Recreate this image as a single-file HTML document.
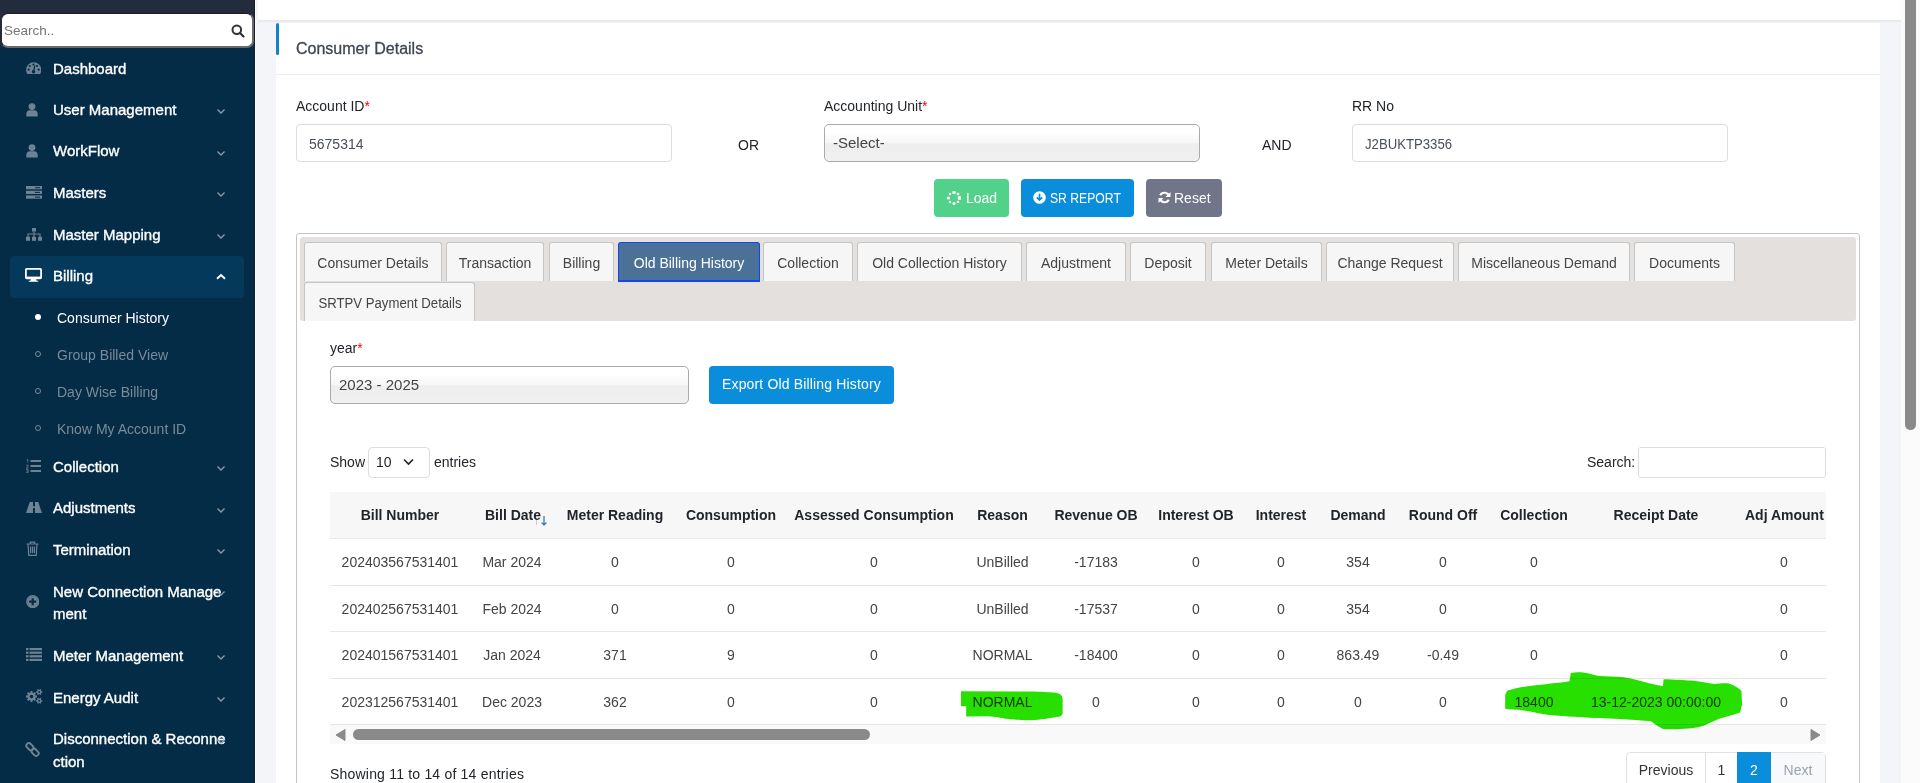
<!DOCTYPE html>
<html><head><meta charset="utf-8">
<style>
*{box-sizing:border-box;margin:0;padding:0}
html,body{width:1920px;height:783px;overflow:hidden;background:#f4f5f8;font-family:"Liberation Sans",sans-serif;font-size:14px;color:#212529;position:relative}
.abs{position:absolute}
</style></head><body>
<div class="abs" style="left:0;top:0;width:255px;height:783px;background:#042c47"></div>
<div class="abs" style="left:0;top:0;width:255px;height:47px;background:#232c3d"></div>
<div class="abs" style="left:254px;top:0;width:1px;height:783px;background:#161c28"></div>
<div class="abs" style="left:255px;top:0;width:1px;height:783px;background:#fdfdfd"></div>
<div class="abs" style="left:1px;top:13px;width:253px;height:35px;background:#fff;border:solid #6b6b6b;border-width:1px 2px 2px 1px;border-top-color:#1c1c1c;border-left-color:#2a2a2a;border-radius:7px"></div>
<div class="abs" style="left:4px;top:21px;line-height:20px;font-size:13.5px;color:#757575">Search..</div>
<svg class="abs" style="left:231px;top:24px" width="14" height="14" viewBox="0 0 14 14"><circle cx="5.8" cy="5.8" r="4.3" fill="none" stroke="#333" stroke-width="2"/><line x1="9" y1="9" x2="12.5" y2="12.5" stroke="#333" stroke-width="2.2" stroke-linecap="round"/></svg>
<div class="abs" style="left:10px;top:256px;width:234px;height:41.5px;background:#04395b;border-radius:4px"></div>
<div class="abs" style="left:53px;top:58.7px;line-height:20px;font-size:15px;color:#fff;white-space:nowrap;-webkit-text-stroke:0.35px #fff">Dashboard</div>
<div class="abs" style="left:26px;top:62px;line-height:0"><svg width="15.4" height="12.2" viewBox="0 0 16 12.7"><path d="M8 0.2A7.9 7.9 0 0 0 0.1 8.1c0 1.7 0.4 3.2 1.2 4.5h13.4c0.8-1.3 1.2-2.8 1.2-4.5A7.9 7.9 0 0 0 8 0.2z" fill="#6d8294"/><circle cx="2.8" cy="8" r="1.1" fill="#042c47"/><circle cx="13.2" cy="8" r="1.1" fill="#042c47"/><circle cx="4" cy="4.2" r="1.1" fill="#042c47"/><circle cx="11.4" cy="4.2" r="1.1" fill="#042c47"/><circle cx="7.7" cy="2.6" r="1.1" fill="#042c47"/><path d="M9.2 3.6 L8 9.5" stroke="#042c47" stroke-width="1.3"/><circle cx="7.8" cy="10.2" r="1.8" fill="#042c47"/></svg></div>
<div class="abs" style="left:53px;top:99.8px;line-height:20px;font-size:15px;color:#fff;white-space:nowrap;-webkit-text-stroke:0.35px #fff">User Management</div>
<div class="abs" style="left:26px;top:103px;line-height:0"><svg width="12" height="14" viewBox="0 0 12 14"><circle cx="6" cy="3.6" r="3.4" fill="#6d8294"/><path d="M0.3 13.5V11c0-2.4 1.6-3.8 3.4-3.8h4.6c1.8 0 3.4 1.4 3.4 3.8v2.5z" fill="#6d8294"/></svg></div>
<svg class="abs" style="left:216px;top:108px" width="10" height="7" viewBox="0 0 10 7"><polyline points="1.5,1.5 5,5 8.5,1.5" fill="none" stroke="#8a9cac" stroke-width="1.3"/></svg>
<div class="abs" style="left:53px;top:141.3px;line-height:20px;font-size:15px;color:#fff;white-space:nowrap;-webkit-text-stroke:0.35px #fff">WorkFlow</div>
<div class="abs" style="left:26px;top:144px;line-height:0"><svg width="12" height="14" viewBox="0 0 12 14"><circle cx="6" cy="3.6" r="3.4" fill="#6d8294"/><path d="M0.3 13.5V11c0-2.4 1.6-3.8 3.4-3.8h4.6c1.8 0 3.4 1.4 3.4 3.8v2.5z" fill="#6d8294"/></svg></div>
<svg class="abs" style="left:216px;top:150px" width="10" height="7" viewBox="0 0 10 7"><polyline points="1.5,1.5 5,5 8.5,1.5" fill="none" stroke="#8a9cac" stroke-width="1.3"/></svg>
<div class="abs" style="left:53px;top:183.0px;line-height:20px;font-size:15px;color:#fff;white-space:nowrap;-webkit-text-stroke:0.35px #fff">Masters</div>
<div class="abs" style="left:26px;top:186px;line-height:0"><svg width="16" height="13" viewBox="0 0 16 13"><rect x="0" y="0" width="16" height="3.3" fill="#6d8294"/><rect x="0" y="4.7" width="16" height="3.3" fill="#6d8294"/><rect x="0" y="9.4" width="16" height="3.3" fill="#6d8294"/><rect x="9" y="1.2" width="5" height="1" fill="#042c47"/><rect x="9" y="5.9" width="5" height="1" fill="#042c47"/><rect x="9" y="10.6" width="5" height="1" fill="#042c47"/></svg></div>
<svg class="abs" style="left:216px;top:191px" width="10" height="7" viewBox="0 0 10 7"><polyline points="1.5,1.5 5,5 8.5,1.5" fill="none" stroke="#8a9cac" stroke-width="1.3"/></svg>
<div class="abs" style="left:53px;top:224.6px;line-height:20px;font-size:15px;color:#fff;white-space:nowrap;-webkit-text-stroke:0.35px #fff">Master Mapping</div>
<div class="abs" style="left:26px;top:228px;line-height:0"><svg width="16" height="13" viewBox="0 0 16 13"><rect x="6" y="0" width="4" height="3.5" fill="#6d8294"/><path d="M8 3.5V6M2 9V6h12v3M8 6v3" stroke="#6d8294" stroke-width="1.2" fill="none"/><rect x="0" y="8.8" width="4" height="4" fill="#6d8294"/><rect x="6" y="8.8" width="4" height="4" fill="#6d8294"/><rect x="12" y="8.8" width="4" height="4" fill="#6d8294"/></svg></div>
<svg class="abs" style="left:216px;top:233px" width="10" height="7" viewBox="0 0 10 7"><polyline points="1.5,1.5 5,5 8.5,1.5" fill="none" stroke="#8a9cac" stroke-width="1.3"/></svg>
<div class="abs" style="left:53px;top:266.3px;line-height:20px;font-size:15px;color:#fff;white-space:nowrap;-webkit-text-stroke:0.35px #fff">Billing</div>
<div class="abs" style="left:25px;top:268px;line-height:0"><svg width="17" height="14" viewBox="0 0 17 14"><rect x="0.9" y="0.9" width="15.2" height="9.4" rx="0.8" fill="none" stroke="#fff" stroke-width="1.8"/><rect x="1" y="8.6" width="15" height="2" fill="#fff"/><path d="M6 10.5h5l0.6 2.2h1.6v1.1H3.8v-1.1h1.6z" fill="#fff"/></svg></div>
<svg class="abs" style="left:216px;top:273px" width="10" height="7" viewBox="0 0 10 7"><polyline points="1,5.8 5,2 9,5.8" fill="none" stroke="#fff" stroke-width="1.9"/></svg>
<div class="abs" style="left:53px;top:456.8px;line-height:20px;font-size:15px;color:#fff;white-space:nowrap;-webkit-text-stroke:0.35px #fff">Collection</div>
<div class="abs" style="left:26px;top:459px;line-height:0"><svg width="15" height="14" viewBox="0 0 15 14"><rect x="4.5" y="1" width="10.5" height="2" fill="#6d8294"/><rect x="4.5" y="6" width="10.5" height="2" fill="#6d8294"/><rect x="4.5" y="11" width="10.5" height="2" fill="#6d8294"/><path d="M0.5 0.3h1.2v3.2M0.2 6.2h2v1.3l-2 1.6h2.2M0.2 10.6h2v3h-2M0.4 12.1h1.6" stroke="#6d8294" stroke-width="0.8" fill="none"/></svg></div>
<svg class="abs" style="left:216px;top:465px" width="10" height="7" viewBox="0 0 10 7"><polyline points="1.5,1.5 5,5 8.5,1.5" fill="none" stroke="#8a9cac" stroke-width="1.3"/></svg>
<div class="abs" style="left:53px;top:498.1px;line-height:20px;font-size:15px;color:#fff;white-space:nowrap;-webkit-text-stroke:0.35px #fff">Adjustments</div>
<div class="abs" style="left:26px;top:502px;line-height:0"><svg width="16" height="11" viewBox="0 0 16 11"><path d="M3.8 0h8.4L16 11H0z" fill="#6d8294"/><rect x="7" y="0" width="2" height="4.3" fill="#042c47"/><rect x="7" y="6" width="2" height="5" fill="#042c47"/></svg></div>
<svg class="abs" style="left:216px;top:507px" width="10" height="7" viewBox="0 0 10 7"><polyline points="1.5,1.5 5,5 8.5,1.5" fill="none" stroke="#8a9cac" stroke-width="1.3"/></svg>
<div class="abs" style="left:53px;top:539.9px;line-height:20px;font-size:15px;color:#fff;white-space:nowrap;-webkit-text-stroke:0.35px #fff">Termination</div>
<div class="abs" style="left:26px;top:541px;line-height:0"><svg width="13" height="15" viewBox="0 0 13 15"><path d="M0.5 3h12M4.3 3V1.2h4.4V3M2 3l0.8 11.3h7.4L11 3M4.6 5.5v6.5M6.5 5.5v6.5M8.4 5.5v6.5" stroke="#6d8294" stroke-width="1.2" fill="none"/></svg></div>
<svg class="abs" style="left:216px;top:548px" width="10" height="7" viewBox="0 0 10 7"><polyline points="1.5,1.5 5,5 8.5,1.5" fill="none" stroke="#8a9cac" stroke-width="1.3"/></svg>
<div class="abs" style="left:53px;top:645.9px;line-height:20px;font-size:15px;color:#fff;white-space:nowrap;-webkit-text-stroke:0.35px #fff">Meter Management</div>
<div class="abs" style="left:26px;top:647.5px;line-height:0"><svg width="16" height="13" viewBox="0 0 16 13"><rect x="0" y="0" width="2.5" height="2.2" fill="#6d8294"/><rect x="0" y="3.6" width="2.5" height="2.2" fill="#6d8294"/><rect x="0" y="7.2" width="2.5" height="2.2" fill="#6d8294"/><rect x="0" y="10.8" width="2.5" height="2.2" fill="#6d8294"/><rect x="3.5" y="0" width="12.5" height="2.2" fill="#6d8294"/><rect x="3.5" y="3.6" width="12.5" height="2.2" fill="#6d8294"/><rect x="3.5" y="7.2" width="12.5" height="2.2" fill="#6d8294"/><rect x="3.5" y="10.8" width="12.5" height="2.2" fill="#6d8294"/></svg></div>
<svg class="abs" style="left:216px;top:654px" width="10" height="7" viewBox="0 0 10 7"><polyline points="1.5,1.5 5,5 8.5,1.5" fill="none" stroke="#8a9cac" stroke-width="1.3"/></svg>
<div class="abs" style="left:53px;top:687.8px;line-height:20px;font-size:15px;color:#fff;white-space:nowrap;-webkit-text-stroke:0.35px #fff">Energy Audit</div>
<div class="abs" style="left:25px;top:688px;line-height:0"><svg width="18" height="17" viewBox="0 0 18 17"><polygon points="12.01,7.52 12.01,9.48 10.60,9.40 10.04,10.76 11.09,11.70 9.70,13.09 8.76,12.04 7.40,12.60 7.48,14.01 5.52,14.01 5.60,12.60 4.24,12.04 3.30,13.09 1.91,11.70 2.96,10.76 2.40,9.40 0.99,9.48 0.99,7.52 2.40,7.60 2.96,6.24 1.91,5.30 3.30,3.91 4.24,4.96 5.60,4.40 5.52,2.99 7.48,2.99 7.40,4.40 8.76,4.96 9.70,3.91 11.09,5.30 10.04,6.24 10.60,7.60" fill="#6d8294"/><circle cx="6.5" cy="8.5" r="1.8" fill="#042c47"/><polygon points="17.31,3.25 17.31,4.75 16.41,4.65 15.87,5.58 16.40,6.32 15.11,7.07 14.74,6.24 13.66,6.24 13.29,7.07 12.00,6.32 12.53,5.58 11.99,4.65 11.09,4.75 11.09,3.25 11.99,3.35 12.53,2.42 12.00,1.68 13.29,0.93 13.66,1.76 14.74,1.76 15.11,0.93 16.40,1.68 15.87,2.42 16.41,3.35" fill="#6d8294"/><circle cx="14.2" cy="4" r="1.0" fill="#042c47"/><polygon points="17.31,12.05 17.31,13.55 16.41,13.45 15.87,14.38 16.40,15.12 15.11,15.87 14.74,15.04 13.66,15.04 13.29,15.87 12.00,15.12 12.53,14.38 11.99,13.45 11.09,13.55 11.09,12.05 11.99,12.15 12.53,11.22 12.00,10.48 13.29,9.73 13.66,10.56 14.74,10.56 15.11,9.73 16.40,10.48 15.87,11.22 16.41,12.15" fill="#6d8294"/><circle cx="14.2" cy="12.8" r="1.0" fill="#042c47"/></svg></div>
<svg class="abs" style="left:216px;top:696px" width="10" height="7" viewBox="0 0 10 7"><polyline points="1.5,1.5 5,5 8.5,1.5" fill="none" stroke="#8a9cac" stroke-width="1.3"/></svg>
<div class="abs" style="left:53px;top:581.5px;line-height:20px;font-size:15px;color:#fff;white-space:nowrap;-webkit-text-stroke:0.35px #fff">New Connection Manage</div>
<div class="abs" style="left:53px;top:604.1px;line-height:20px;font-size:15px;color:#fff;white-space:nowrap;-webkit-text-stroke:0.35px #fff">ment</div>
<div class="abs" style="left:26px;top:595px;line-height:0"><svg width="13.4" height="13.4" viewBox="0 0 15 15"><circle cx="7.5" cy="7.5" r="6.6" fill="none" stroke="#6d8294" stroke-width="1.6"/><circle cx="7.5" cy="7.5" r="6" fill="#6d8294"/><path d="M7.5 3.6v7.8M3.6 7.5h7.8" stroke="#042c47" stroke-width="2.4"/></svg></div>
<svg class="abs" style="left:216px;top:590px" width="10" height="7" viewBox="0 0 10 7"><polyline points="1.5,1.5 5,5 8.5,1.5" fill="none" stroke="#8a9cac" stroke-width="1.3"/></svg>
<div class="abs" style="left:53px;top:729.4px;line-height:20px;font-size:15px;color:#fff;white-space:nowrap;-webkit-text-stroke:0.35px #fff">Disconnection &amp; Reconne</div>
<div class="abs" style="left:53px;top:752.1px;line-height:20px;font-size:15px;color:#fff;white-space:nowrap;-webkit-text-stroke:0.35px #fff">ction</div>
<div class="abs" style="left:25px;top:742px;line-height:0"><svg width="15" height="15" viewBox="0 0 15 15"><rect x="0.9" y="2.2" width="8" height="5" rx="2.5" transform="rotate(45 4.9 4.7)" fill="none" stroke="#6d8294" stroke-width="1.9"/><rect x="6.1" y="7.8" width="8" height="5" rx="2.5" transform="rotate(45 10.1 10.3)" fill="none" stroke="#6d8294" stroke-width="1.9"/></svg></div>
<svg class="abs" style="left:216px;top:738px" width="10" height="7" viewBox="0 0 10 7"><polyline points="1.5,1.5 5,5 8.5,1.5" fill="none" stroke="#8a9cac" stroke-width="1.3"/></svg>
<div class="abs" style="left:57px;top:308.0px;line-height:20px;font-size:14px;color:#fff;white-space:nowrap">Consumer History</div>
<div class="abs" style="left:35px;top:314.2px;width:6px;height:6px;border-radius:50%;background:#fff"></div>
<div class="abs" style="left:57px;top:344.8px;line-height:20px;font-size:14px;color:#7a8a98;white-space:nowrap">Group Billed View</div>
<div class="abs" style="left:35px;top:351.0px;width:6px;height:6px;border-radius:50%;border:1.3px solid #7a8a98"></div>
<div class="abs" style="left:57px;top:382.0px;line-height:20px;font-size:14px;color:#7a8a98;white-space:nowrap">Day Wise Billing</div>
<div class="abs" style="left:35px;top:388.2px;width:6px;height:6px;border-radius:50%;border:1.3px solid #7a8a98"></div>
<div class="abs" style="left:57px;top:418.8px;line-height:20px;font-size:14px;color:#7a8a98;white-space:nowrap">Know My Account ID</div>
<div class="abs" style="left:35px;top:425.0px;width:6px;height:6px;border-radius:50%;border:1.3px solid #7a8a98"></div>
<div class="abs" style="left:258px;top:0;width:1643px;height:20px;background:#fff"></div>
<div class="abs" style="left:258px;top:20px;width:1643px;height:3px;background:linear-gradient(#e6e7ec,#f1f2f6)"></div>
<div class="abs" style="left:276px;top:23px;width:1604px;height:770px;background:#fff"></div>
<div class="abs" style="left:276px;top:23px;width:3px;height:32px;background:#1582c5;border-radius:2px"></div>
<div class="abs" style="left:276px;top:74px;width:1604px;height:1px;background:#ebedf0"></div>
<div class="abs" style="left:296px;top:38.0px;line-height:22px;font-size:16px;color:#3f4650;font-weight:400;white-space:nowrap;-webkit-text-stroke:0.3px #3f4650">Consumer Details</div>
<div class="abs" style="left:1901px;top:0;width:19px;height:783px;background:#fbfbfb"></div>
<div class="abs" style="left:1905px;top:0;width:11px;height:430px;background:#8a8a8a;border-radius:0 0 6px 6px"></div>
<div class="abs" style="left:296px;top:96.4px;line-height:20px;font-size:14px;color:#212529;font-weight:400;white-space:nowrap;">Account ID<span style="color:#ff0000">*</span></div>
<div class="abs" style="left:824px;top:96.4px;line-height:20px;font-size:14px;color:#212529;font-weight:400;white-space:nowrap;">Accounting Unit<span style="color:#ff0000">*</span></div>
<div class="abs" style="left:1352px;top:96.4px;line-height:20px;font-size:14px;color:#212529;font-weight:400;white-space:nowrap;">RR No</div>
<div class="abs" style="left:296px;top:124px;width:376px;height:38px;border:1px solid #dadde1;border-radius:4px;background:#fff"></div>
<div class="abs" style="left:309px;top:134.2px;line-height:20px;font-size:14px;color:#495057;font-weight:400;white-space:nowrap;">5675314</div>
<div class="abs" style="left:738px;top:135.2px;line-height:20px;font-size:14px;color:#212529;font-weight:400;white-space:nowrap;">OR</div>
<div class="abs" style="left:824px;top:124px;width:376px;height:38px;border:1px solid #aaa;border-radius:5px;background:linear-gradient(#fff 0%,#fff 20%,#f6f6f6 50%,#eee 52%,#f0f0f0 100%)"></div>
<div class="abs" style="left:833px;top:133.2px;line-height:20px;font-size:15px;color:#444;font-weight:400;white-space:nowrap;">-Select-</div>
<div class="abs" style="left:1262px;top:135.2px;line-height:20px;font-size:14px;color:#212529;font-weight:400;white-space:nowrap;">AND</div>
<div class="abs" style="left:1352px;top:124px;width:376px;height:38px;border:1px solid #dadde1;border-radius:4px;background:#fff"></div>
<div class="abs" style="left:1365px;top:134.2px;line-height:20px;font-size:14px;color:#495057;font-weight:400;white-space:nowrap;transform:scaleX(0.94);transform-origin:0 0">J2BUKTP3356</div>
<div class="abs" style="left:934px;top:179px;width:75px;height:38px;background:#52d18b;border-radius:4px"></div>
<div class="abs" style="left:947px;top:191px;line-height:0"><svg width="14" height="14" viewBox="0 0 14 14"><circle cx="12.60" cy="7.00" r="1.9" fill="#fff"/><circle cx="10.96" cy="10.96" r="1.3" fill="#fff"/><circle cx="7.00" cy="12.60" r="1.5" fill="#fff"/><circle cx="3.04" cy="10.96" r="1.2" fill="#fff"/><circle cx="1.40" cy="7.00" r="1.6" fill="#fff"/><circle cx="3.04" cy="3.04" r="1.2" fill="#fff"/><circle cx="7.00" cy="1.40" r="1.7" fill="#fff"/><circle cx="10.96" cy="3.04" r="1.4" fill="#fff"/></svg></div>
<div class="abs" style="left:966px;top:188.2px;line-height:20px;font-size:14px;color:#fff;font-weight:400;white-space:nowrap;">Load</div>
<div class="abs" style="left:1021px;top:179px;width:113px;height:38px;background:#0a8ddb;border-radius:4px"></div>
<svg class="abs" style="left:1033px;top:191px" width="13" height="13" viewBox="0 0 13 13"><circle cx="6.5" cy="6.5" r="6.3" fill="#fff"/><path d="M6.5 2.8v6M3.8 6.3l2.7 2.7 2.7-2.7" stroke="#0a8ddb" stroke-width="1.7" fill="none"/></svg>
<div class="abs" style="left:1050px;top:188.2px;line-height:20px;font-size:14px;color:#fff;font-weight:400;white-space:nowrap;transform:scaleX(0.87);transform-origin:0 0">SR REPORT</div>
<div class="abs" style="left:1146px;top:179px;width:76px;height:38px;background:#70758a;border-radius:4px"></div>
<svg class="abs" style="left:1158px;top:191px" width="13" height="13" viewBox="0 0 13 13"><path d="M11 5.2A4.8 4.8 0 0 0 2.2 4.2M2 7.8A4.8 4.8 0 0 0 10.8 8.8" stroke="#fff" stroke-width="2.2" fill="none"/><path d="M12.5 1v5H7.5zM0.5 12V7h5z" fill="#fff"/></svg>
<div class="abs" style="left:1174px;top:188.2px;line-height:20px;font-size:14px;color:#fff;font-weight:400;white-space:nowrap;">Reset</div>
<div class="abs" style="left:296px;top:233px;width:1564px;height:600px;border:1px solid #c5c5c5;border-radius:3px;background:#fff"></div>
<div class="abs" style="left:300px;top:237px;width:1556px;height:84px;background:#e4e0de;border-radius:3px"></div>
<div class="abs" style="left:304px;top:242px;width:138px;height:39px;background:#f6f6f6;border:1px solid #c5c5c5;border-bottom:none;border-radius:3px 3px 0 0"></div>
<div class="abs" style="left:223.0px;width:300px;text-align:center;top:253.0px;line-height:20px;font-size:14px;color:#454545;font-weight:400;white-space:nowrap;">Consumer Details</div>
<div class="abs" style="left:446px;top:242px;width:98px;height:39px;background:#f6f6f6;border:1px solid #c5c5c5;border-bottom:none;border-radius:3px 3px 0 0"></div>
<div class="abs" style="left:345.0px;width:300px;text-align:center;top:253.0px;line-height:20px;font-size:14px;color:#454545;font-weight:400;white-space:nowrap;">Transaction</div>
<div class="abs" style="left:549px;top:242px;width:65px;height:39px;background:#f6f6f6;border:1px solid #c5c5c5;border-bottom:none;border-radius:3px 3px 0 0"></div>
<div class="abs" style="left:431.5px;width:300px;text-align:center;top:253.0px;line-height:20px;font-size:14px;color:#454545;font-weight:400;white-space:nowrap;">Billing</div>
<div class="abs" style="left:618px;top:242px;width:142px;height:40px;background:#4c7196;border:1px solid #0d46f5;border-bottom-width:2px;border-radius:3px 3px 0 0"></div>
<div class="abs" style="left:539.0px;width:300px;text-align:center;top:253.0px;line-height:20px;font-size:14px;color:#fff;font-weight:400;white-space:nowrap;">Old Billing History</div>
<div class="abs" style="left:763px;top:242px;width:90px;height:39px;background:#f6f6f6;border:1px solid #c5c5c5;border-bottom:none;border-radius:3px 3px 0 0"></div>
<div class="abs" style="left:658.0px;width:300px;text-align:center;top:253.0px;line-height:20px;font-size:14px;color:#454545;font-weight:400;white-space:nowrap;">Collection</div>
<div class="abs" style="left:857px;top:242px;width:165px;height:39px;background:#f6f6f6;border:1px solid #c5c5c5;border-bottom:none;border-radius:3px 3px 0 0"></div>
<div class="abs" style="left:789.5px;width:300px;text-align:center;top:253.0px;line-height:20px;font-size:14px;color:#454545;font-weight:400;white-space:nowrap;">Old Collection History</div>
<div class="abs" style="left:1026px;top:242px;width:100px;height:39px;background:#f6f6f6;border:1px solid #c5c5c5;border-bottom:none;border-radius:3px 3px 0 0"></div>
<div class="abs" style="left:926.0px;width:300px;text-align:center;top:253.0px;line-height:20px;font-size:14px;color:#454545;font-weight:400;white-space:nowrap;">Adjustment</div>
<div class="abs" style="left:1130px;top:242px;width:76px;height:39px;background:#f6f6f6;border:1px solid #c5c5c5;border-bottom:none;border-radius:3px 3px 0 0"></div>
<div class="abs" style="left:1018.0px;width:300px;text-align:center;top:253.0px;line-height:20px;font-size:14px;color:#454545;font-weight:400;white-space:nowrap;">Deposit</div>
<div class="abs" style="left:1211px;top:242px;width:111px;height:39px;background:#f6f6f6;border:1px solid #c5c5c5;border-bottom:none;border-radius:3px 3px 0 0"></div>
<div class="abs" style="left:1116.5px;width:300px;text-align:center;top:253.0px;line-height:20px;font-size:14px;color:#454545;font-weight:400;white-space:nowrap;">Meter Details</div>
<div class="abs" style="left:1326px;top:242px;width:128px;height:39px;background:#f6f6f6;border:1px solid #c5c5c5;border-bottom:none;border-radius:3px 3px 0 0"></div>
<div class="abs" style="left:1240.0px;width:300px;text-align:center;top:253.0px;line-height:20px;font-size:14px;color:#454545;font-weight:400;white-space:nowrap;">Change Request</div>
<div class="abs" style="left:1458px;top:242px;width:172px;height:39px;background:#f6f6f6;border:1px solid #c5c5c5;border-bottom:none;border-radius:3px 3px 0 0"></div>
<div class="abs" style="left:1394.0px;width:300px;text-align:center;top:253.0px;line-height:20px;font-size:14px;color:#454545;font-weight:400;white-space:nowrap;">Miscellaneous Demand</div>
<div class="abs" style="left:1634px;top:242px;width:101px;height:39px;background:#f6f6f6;border:1px solid #c5c5c5;border-bottom:none;border-radius:3px 3px 0 0"></div>
<div class="abs" style="left:1534.5px;width:300px;text-align:center;top:253.0px;line-height:20px;font-size:14px;color:#454545;font-weight:400;white-space:nowrap;">Documents</div>
<div class="abs" style="left:304px;top:282px;width:171px;height:39px;background:#f6f6f6;border:1px solid #c5c5c5;border-bottom:none;border-radius:3px 3px 0 0"></div>
<div class="abs" style="left:239.5px;width:300px;text-align:center;top:293.0px;line-height:20px;font-size:14px;color:#454545;font-weight:400;white-space:nowrap;transform:scaleX(0.94)">SRTPV Payment Details</div>
<div class="abs" style="left:330px;top:337.8px;line-height:20px;font-size:14px;color:#212529;font-weight:400;white-space:nowrap;">year<span style="color:#ff0000">*</span></div>
<div class="abs" style="left:330px;top:366px;width:359px;height:38px;border:1px solid #aaa;border-radius:5px;background:linear-gradient(#fff 0%,#fff 20%,#f6f6f6 50%,#eee 52%,#f0f0f0 100%)"></div>
<div class="abs" style="left:339px;top:374.7px;line-height:20px;font-size:15px;color:#444;font-weight:400;white-space:nowrap;">2023 - 2025</div>
<div class="abs" style="left:709px;top:366px;width:185px;height:38px;background:#0a8ddb;border-radius:4px"></div>
<div class="abs" style="left:722px;top:374.1px;line-height:20px;font-size:14px;color:#fff;font-weight:400;white-space:nowrap;letter-spacing:0.16px">Export Old Billing History</div>
<div class="abs" style="left:330px;top:452.2px;line-height:20px;font-size:14px;color:#212529;font-weight:400;white-space:nowrap;">Show</div>
<div class="abs" style="left:368px;top:447px;width:62px;height:31px;border:1px solid #dadde1;border-radius:4px;background:#fff"></div>
<div class="abs" style="left:376px;top:452.2px;line-height:20px;font-size:14px;color:#212529;font-weight:400;white-space:nowrap;">10</div>
<svg class="abs" style="left:403px;top:458px" width="11" height="8" viewBox="0 0 11 8"><polyline points="1,1.5 5.5,6 10,1.5" fill="none" stroke="#222" stroke-width="1.6"/></svg>
<div class="abs" style="left:434px;top:452.2px;line-height:20px;font-size:14px;color:#212529;font-weight:400;white-space:nowrap;">entries</div>
<div class="abs" style="left:1587px;top:452.2px;line-height:20px;font-size:14px;color:#212529;font-weight:400;white-space:nowrap;">Search:</div>
<div class="abs" style="left:1638px;top:447px;width:188px;height:31px;border:1px solid #dadde1;border-radius:3px;background:#fff"></div>
<div class="abs" style="left:330px;top:492px;width:1496px;height:47px;background:#f7f7f7"></div>
<div class="abs" style="left:330px;top:538px;width:1496px;height:1px;background:#e9e9e9"></div>
<div class="abs" style="left:250px;width:300px;text-align:center;top:505.2px;line-height:20px;font-size:14px;color:#212529;font-weight:700;white-space:nowrap;">Bill Number</div>
<div class="abs" style="left:485px;top:505.2px;line-height:20px;font-size:14px;color:#212529;font-weight:700;white-space:nowrap;">Bill Date</div>
<div class="abs" style="left:465px;width:300px;text-align:center;top:505.2px;line-height:20px;font-size:14px;color:#212529;font-weight:700;white-space:nowrap;">Meter Reading</div>
<div class="abs" style="left:581px;width:300px;text-align:center;top:505.2px;line-height:20px;font-size:14px;color:#212529;font-weight:700;white-space:nowrap;">Consumption</div>
<div class="abs" style="left:724px;width:300px;text-align:center;top:505.2px;line-height:20px;font-size:14px;color:#212529;font-weight:700;white-space:nowrap;">Assessed Consumption</div>
<div class="abs" style="left:852.5px;width:300px;text-align:center;top:505.2px;line-height:20px;font-size:14px;color:#212529;font-weight:700;white-space:nowrap;">Reason</div>
<div class="abs" style="left:946px;width:300px;text-align:center;top:505.2px;line-height:20px;font-size:14px;color:#212529;font-weight:700;white-space:nowrap;">Revenue OB</div>
<div class="abs" style="left:1046px;width:300px;text-align:center;top:505.2px;line-height:20px;font-size:14px;color:#212529;font-weight:700;white-space:nowrap;">Interest OB</div>
<div class="abs" style="left:1131px;width:300px;text-align:center;top:505.2px;line-height:20px;font-size:14px;color:#212529;font-weight:700;white-space:nowrap;">Interest</div>
<div class="abs" style="left:1208px;width:300px;text-align:center;top:505.2px;line-height:20px;font-size:14px;color:#212529;font-weight:700;white-space:nowrap;">Demand</div>
<div class="abs" style="left:1293px;width:300px;text-align:center;top:505.2px;line-height:20px;font-size:14px;color:#212529;font-weight:700;white-space:nowrap;">Round Off</div>
<div class="abs" style="left:1384px;width:300px;text-align:center;top:505.2px;line-height:20px;font-size:14px;color:#212529;font-weight:700;white-space:nowrap;">Collection</div>
<div class="abs" style="left:1506px;width:300px;text-align:center;top:505.2px;line-height:20px;font-size:14px;color:#212529;font-weight:700;white-space:nowrap;">Receipt Date</div>
<div class="abs" style="left:1745px;top:505.2px;line-height:20px;font-size:14px;color:#212529;font-weight:700;white-space:nowrap;">Adj Amount</div>
<div class="abs" style="left:536px;top:520px;width:1px;height:5px;background:#ccc"></div><svg class="abs" style="left:540px;top:515px" width="8" height="11" viewBox="0 0 8 11"><path d="M4 1v9M1.6 7.6L4 10l2.4-2.4" stroke="#2a6fb0" stroke-width="1.2" fill="none"/></svg>
<div class="abs" style="left:250px;width:300px;text-align:center;top:552.2px;line-height:20px;font-size:14px;color:#444;font-weight:400;white-space:nowrap;">202403567531401</div>
<div class="abs" style="left:362px;width:300px;text-align:center;top:552.2px;line-height:20px;font-size:14px;color:#444;font-weight:400;white-space:nowrap;">Mar 2024</div>
<div class="abs" style="left:465px;width:300px;text-align:center;top:552.2px;line-height:20px;font-size:14px;color:#444;font-weight:400;white-space:nowrap;">0</div>
<div class="abs" style="left:581px;width:300px;text-align:center;top:552.2px;line-height:20px;font-size:14px;color:#444;font-weight:400;white-space:nowrap;">0</div>
<div class="abs" style="left:724px;width:300px;text-align:center;top:552.2px;line-height:20px;font-size:14px;color:#444;font-weight:400;white-space:nowrap;">0</div>
<div class="abs" style="left:852.5px;width:300px;text-align:center;top:552.2px;line-height:20px;font-size:14px;color:#444;font-weight:400;white-space:nowrap;">UnBilled</div>
<div class="abs" style="left:946px;width:300px;text-align:center;top:552.2px;line-height:20px;font-size:14px;color:#444;font-weight:400;white-space:nowrap;">-17183</div>
<div class="abs" style="left:1046px;width:300px;text-align:center;top:552.2px;line-height:20px;font-size:14px;color:#444;font-weight:400;white-space:nowrap;">0</div>
<div class="abs" style="left:1131px;width:300px;text-align:center;top:552.2px;line-height:20px;font-size:14px;color:#444;font-weight:400;white-space:nowrap;">0</div>
<div class="abs" style="left:1208px;width:300px;text-align:center;top:552.2px;line-height:20px;font-size:14px;color:#444;font-weight:400;white-space:nowrap;">354</div>
<div class="abs" style="left:1293px;width:300px;text-align:center;top:552.2px;line-height:20px;font-size:14px;color:#444;font-weight:400;white-space:nowrap;">0</div>
<div class="abs" style="left:1384px;width:300px;text-align:center;top:552.2px;line-height:20px;font-size:14px;color:#444;font-weight:400;white-space:nowrap;">0</div>
<div class="abs" style="left:1634px;width:300px;text-align:center;top:552.2px;line-height:20px;font-size:14px;color:#444;font-weight:400;white-space:nowrap;">0</div>
<div class="abs" style="left:330px;top:585px;width:1496px;height:1px;background:#e6e6e6"></div>
<div class="abs" style="left:250px;width:300px;text-align:center;top:598.8px;line-height:20px;font-size:14px;color:#444;font-weight:400;white-space:nowrap;">202402567531401</div>
<div class="abs" style="left:362px;width:300px;text-align:center;top:598.8px;line-height:20px;font-size:14px;color:#444;font-weight:400;white-space:nowrap;">Feb 2024</div>
<div class="abs" style="left:465px;width:300px;text-align:center;top:598.8px;line-height:20px;font-size:14px;color:#444;font-weight:400;white-space:nowrap;">0</div>
<div class="abs" style="left:581px;width:300px;text-align:center;top:598.8px;line-height:20px;font-size:14px;color:#444;font-weight:400;white-space:nowrap;">0</div>
<div class="abs" style="left:724px;width:300px;text-align:center;top:598.8px;line-height:20px;font-size:14px;color:#444;font-weight:400;white-space:nowrap;">0</div>
<div class="abs" style="left:852.5px;width:300px;text-align:center;top:598.8px;line-height:20px;font-size:14px;color:#444;font-weight:400;white-space:nowrap;">UnBilled</div>
<div class="abs" style="left:946px;width:300px;text-align:center;top:598.8px;line-height:20px;font-size:14px;color:#444;font-weight:400;white-space:nowrap;">-17537</div>
<div class="abs" style="left:1046px;width:300px;text-align:center;top:598.8px;line-height:20px;font-size:14px;color:#444;font-weight:400;white-space:nowrap;">0</div>
<div class="abs" style="left:1131px;width:300px;text-align:center;top:598.8px;line-height:20px;font-size:14px;color:#444;font-weight:400;white-space:nowrap;">0</div>
<div class="abs" style="left:1208px;width:300px;text-align:center;top:598.8px;line-height:20px;font-size:14px;color:#444;font-weight:400;white-space:nowrap;">354</div>
<div class="abs" style="left:1293px;width:300px;text-align:center;top:598.8px;line-height:20px;font-size:14px;color:#444;font-weight:400;white-space:nowrap;">0</div>
<div class="abs" style="left:1384px;width:300px;text-align:center;top:598.8px;line-height:20px;font-size:14px;color:#444;font-weight:400;white-space:nowrap;">0</div>
<div class="abs" style="left:1634px;width:300px;text-align:center;top:598.8px;line-height:20px;font-size:14px;color:#444;font-weight:400;white-space:nowrap;">0</div>
<div class="abs" style="left:330px;top:631px;width:1496px;height:1px;background:#e6e6e6"></div>
<div class="abs" style="left:250px;width:300px;text-align:center;top:645.4px;line-height:20px;font-size:14px;color:#444;font-weight:400;white-space:nowrap;">202401567531401</div>
<div class="abs" style="left:362px;width:300px;text-align:center;top:645.4px;line-height:20px;font-size:14px;color:#444;font-weight:400;white-space:nowrap;">Jan 2024</div>
<div class="abs" style="left:465px;width:300px;text-align:center;top:645.4px;line-height:20px;font-size:14px;color:#444;font-weight:400;white-space:nowrap;">371</div>
<div class="abs" style="left:581px;width:300px;text-align:center;top:645.4px;line-height:20px;font-size:14px;color:#444;font-weight:400;white-space:nowrap;">9</div>
<div class="abs" style="left:724px;width:300px;text-align:center;top:645.4px;line-height:20px;font-size:14px;color:#444;font-weight:400;white-space:nowrap;">0</div>
<div class="abs" style="left:852.5px;width:300px;text-align:center;top:645.4px;line-height:20px;font-size:14px;color:#444;font-weight:400;white-space:nowrap;">NORMAL</div>
<div class="abs" style="left:946px;width:300px;text-align:center;top:645.4px;line-height:20px;font-size:14px;color:#444;font-weight:400;white-space:nowrap;">-18400</div>
<div class="abs" style="left:1046px;width:300px;text-align:center;top:645.4px;line-height:20px;font-size:14px;color:#444;font-weight:400;white-space:nowrap;">0</div>
<div class="abs" style="left:1131px;width:300px;text-align:center;top:645.4px;line-height:20px;font-size:14px;color:#444;font-weight:400;white-space:nowrap;">0</div>
<div class="abs" style="left:1208px;width:300px;text-align:center;top:645.4px;line-height:20px;font-size:14px;color:#444;font-weight:400;white-space:nowrap;">863.49</div>
<div class="abs" style="left:1293px;width:300px;text-align:center;top:645.4px;line-height:20px;font-size:14px;color:#444;font-weight:400;white-space:nowrap;">-0.49</div>
<div class="abs" style="left:1384px;width:300px;text-align:center;top:645.4px;line-height:20px;font-size:14px;color:#444;font-weight:400;white-space:nowrap;">0</div>
<div class="abs" style="left:1634px;width:300px;text-align:center;top:645.4px;line-height:20px;font-size:14px;color:#444;font-weight:400;white-space:nowrap;">0</div>
<div class="abs" style="left:330px;top:678px;width:1496px;height:1px;background:#e6e6e6"></div>
<div class="abs" style="left:250px;width:300px;text-align:center;top:692.0px;line-height:20px;font-size:14px;color:#444;font-weight:400;white-space:nowrap;">202312567531401</div>
<div class="abs" style="left:362px;width:300px;text-align:center;top:692.0px;line-height:20px;font-size:14px;color:#444;font-weight:400;white-space:nowrap;">Dec 2023</div>
<div class="abs" style="left:465px;width:300px;text-align:center;top:692.0px;line-height:20px;font-size:14px;color:#444;font-weight:400;white-space:nowrap;">362</div>
<div class="abs" style="left:581px;width:300px;text-align:center;top:692.0px;line-height:20px;font-size:14px;color:#444;font-weight:400;white-space:nowrap;">0</div>
<div class="abs" style="left:724px;width:300px;text-align:center;top:692.0px;line-height:20px;font-size:14px;color:#444;font-weight:400;white-space:nowrap;">0</div>
<div class="abs" style="left:852.5px;width:300px;text-align:center;top:692.0px;line-height:20px;font-size:14px;color:#444;font-weight:400;white-space:nowrap;">NORMAL</div>
<div class="abs" style="left:946px;width:300px;text-align:center;top:692.0px;line-height:20px;font-size:14px;color:#444;font-weight:400;white-space:nowrap;">0</div>
<div class="abs" style="left:1046px;width:300px;text-align:center;top:692.0px;line-height:20px;font-size:14px;color:#444;font-weight:400;white-space:nowrap;">0</div>
<div class="abs" style="left:1131px;width:300px;text-align:center;top:692.0px;line-height:20px;font-size:14px;color:#444;font-weight:400;white-space:nowrap;">0</div>
<div class="abs" style="left:1208px;width:300px;text-align:center;top:692.0px;line-height:20px;font-size:14px;color:#444;font-weight:400;white-space:nowrap;">0</div>
<div class="abs" style="left:1293px;width:300px;text-align:center;top:692.0px;line-height:20px;font-size:14px;color:#444;font-weight:400;white-space:nowrap;">0</div>
<div class="abs" style="left:1384px;width:300px;text-align:center;top:692.0px;line-height:20px;font-size:14px;color:#444;font-weight:400;white-space:nowrap;">18400</div>
<div class="abs" style="left:1506px;width:300px;text-align:center;top:692.0px;line-height:20px;font-size:14px;color:#444;font-weight:400;white-space:nowrap;">13-12-2023 00:00:00</div>
<div class="abs" style="left:1634px;width:300px;text-align:center;top:692.0px;line-height:20px;font-size:14px;color:#444;font-weight:400;white-space:nowrap;">0</div>
<div class="abs" style="left:330px;top:724px;width:1496px;height:1px;background:#e6e6e6"></div>
<div class="abs" style="left:330px;top:725px;width:1496px;height:19px;background:#f9f9f9"></div>
<div class="abs" style="left:353px;top:729px;width:517px;height:11px;background:#8a8a8a;border-radius:6px"></div>
<svg class="abs" style="left:335px;top:729px" width="11" height="12" viewBox="0 0 11 12"><path d="M1 6L10 0.5V11.5z" fill="#8a8a8a" stroke="#8a8a8a" stroke-linejoin="round"/></svg>
<svg class="abs" style="left:1810px;top:729px" width="11" height="12" viewBox="0 0 11 12"><path d="M10 6L1 0.5V11.5z" fill="#8a8a8a" stroke="#8a8a8a" stroke-linejoin="round"/></svg>
<div class="abs" style="left:330px;top:764.0px;line-height:20px;font-size:14px;color:#212529;font-weight:400;white-space:nowrap;letter-spacing:0.2px">Showing 11 to 14 of 14 entries</div>
<div class="abs" style="left:1626px;top:752px;width:200px;height:40px;border:1px solid #dee2e6;border-radius:4px;background:#fff"></div>
<div class="abs" style="left:1705px;top:752px;width:1px;height:40px;background:#dee2e6"></div>
<div class="abs" style="left:1737px;top:752px;width:34px;height:40px;background:#0a8ddb"></div>
<div class="abs" style="left:1771px;top:753px;width:54px;height:39px;background:#f8f9fa"></div>
<div class="abs" style="left:1516px;width:300px;text-align:center;top:760.2px;line-height:20px;font-size:14px;color:#333;font-weight:400;white-space:nowrap;">Previous</div>
<div class="abs" style="left:1571.5px;width:300px;text-align:center;top:760.2px;line-height:20px;font-size:14px;color:#333;font-weight:400;white-space:nowrap;">1</div>
<div class="abs" style="left:1604px;width:300px;text-align:center;top:760.2px;line-height:20px;font-size:14px;color:#fff;font-weight:400;white-space:nowrap;">2</div>
<div class="abs" style="left:1648px;width:300px;text-align:center;top:760.2px;line-height:20px;font-size:14px;color:#9aa3ab;font-weight:400;white-space:nowrap;">Next</div>
<svg class="abs" style="left:0;top:0;mix-blend-mode:multiply" width="1920" height="783"><path fill="#28e000" d="M961 691.2 L1034 691.6 C1045 692 1052 692.5 1056 692.8 C1061 694 1062.6 696 1062.6 699 L1062.6 713.5 C1062 716 1060 717 1056 717 C1045 719 1035 720.5 1028 720.3 C1018 720 1010 719.5 1006 718.8 C998 717.5 992 716.5 987.5 716.3 L966.2 716.6 L966.2 706.2 L961 706.2 Z"/><path fill="#28e000" d="M1505.2 694.8 L1507.2 690.7 C1515 688 1525 686.5 1535.6 685.3 C1550 683.5 1562 682.5 1569.5 681.2 L1570.8 673.1 C1574 672.4 1578 672.2 1583 672.4 C1590 673 1594 675 1597.9 675.8 C1608 676.5 1616 676.5 1623.6 677.2 C1640 680 1650 684 1662.9 686 L1663.6 679.2 C1675 679.5 1683 680 1691.3 680.6 C1700 681.5 1708 683.5 1714.4 684 C1720 683 1724 683 1727.9 683.3 C1734 685 1738 688 1741.4 690.7 L1742.1 704.3 L1740.1 712.4 C1733 715 1726 716.5 1719.8 718.5 C1712 722 1705 725.5 1698.1 727.3 C1688 729 1675 729.6 1664.3 729.3 C1658 727 1654 723 1650.7 721.2 C1630 719.5 1610 718.5 1589.8 717.8 C1575 717 1562 716 1549.2 715.1 C1538 713.5 1528 711 1518 709.7 L1505.2 709 Z"/></svg>
</body></html>
